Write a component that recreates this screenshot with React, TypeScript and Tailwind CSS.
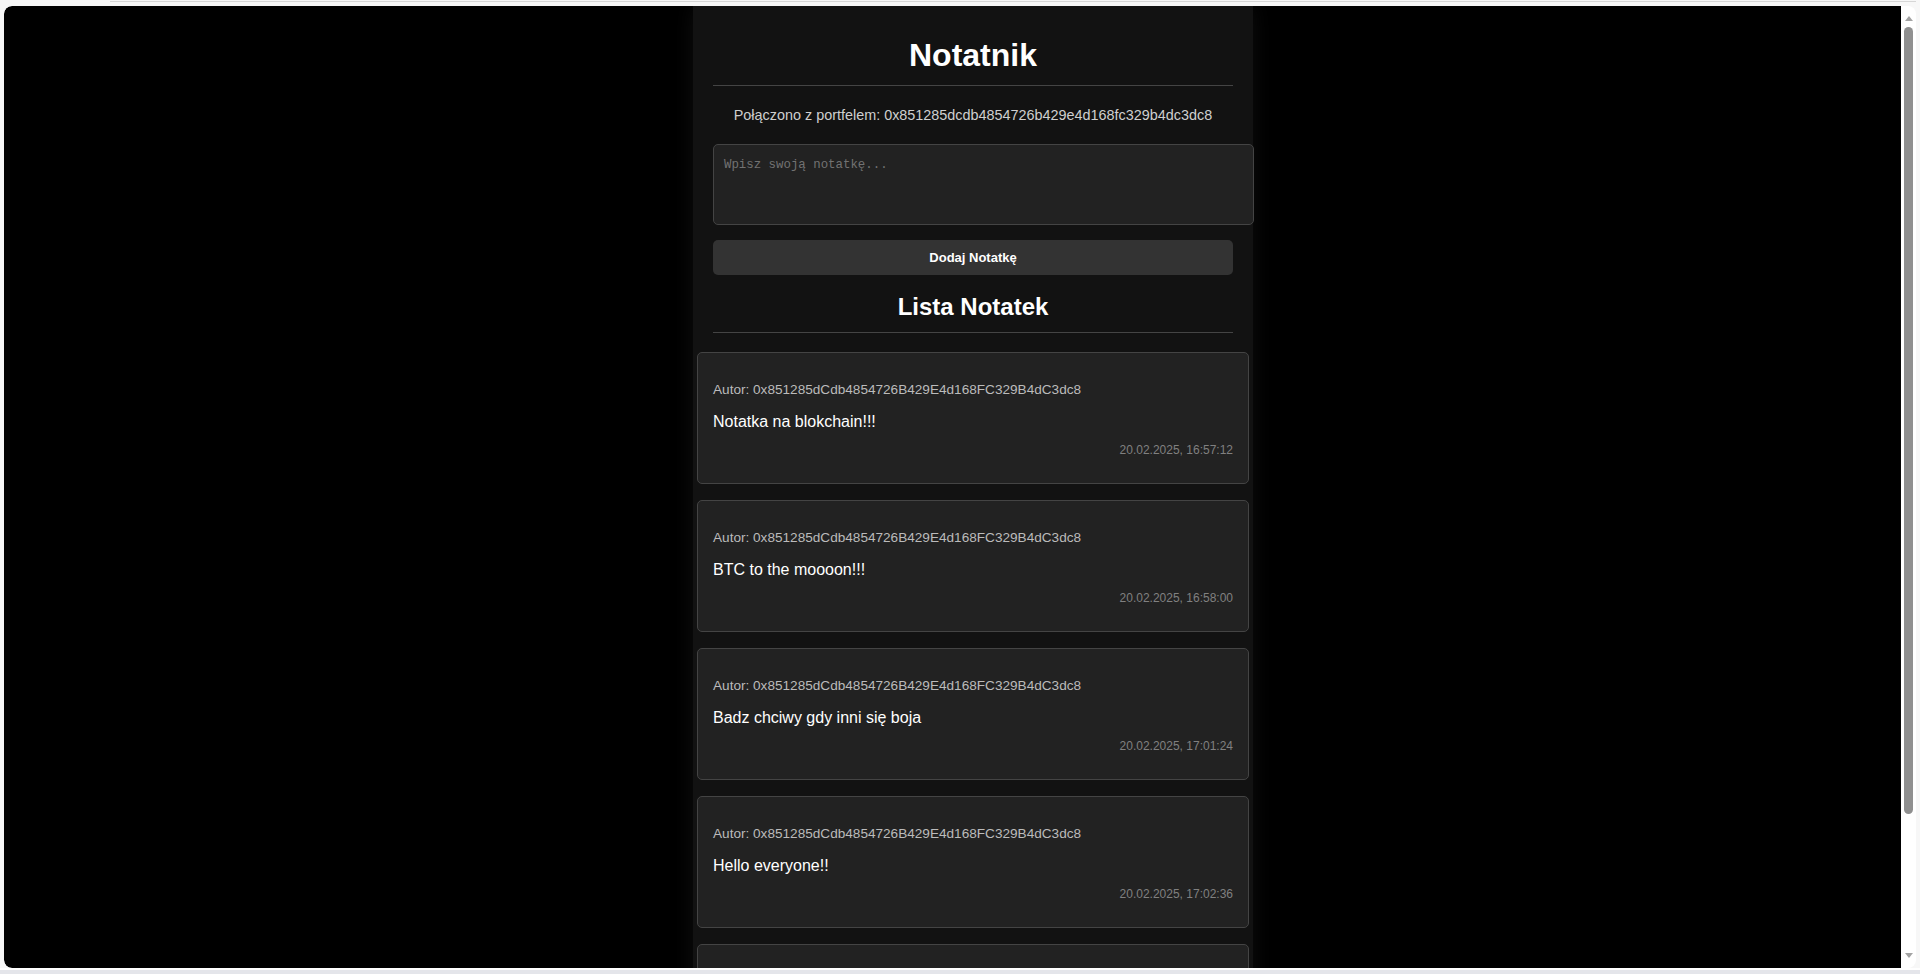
const AUTHOR = "0x851285dCdb4854726B429E4d168FC329B4dC3dc8";

const notes = [
  { text: "Notatka na blokchain!!!", date: "20.02.2025, 16:57:12" },
  { text: "BTC to the moooon!!!", date: "20.02.2025, 16:58:00" },
  { text: "Badz chciwy gdy inni się boja", date: "20.02.2025, 17:01:24" },
  { text: "Hello everyone!!", date: "20.02.2025, 17:02:36" },
];

const NoteCard = ({ text, date }: { text: string; date: string }) => (
  <div className="border border-[#444] rounded-[5px] bg-[#222] pt-[29px] pb-[26px] px-[15px]">
    <p className="text-[13.6px] leading-[16px] text-[#bbb]">Autor: {AUTHOR}</p>
    <p className="mt-[15px] text-[16px] leading-[18px] text-white">{text}</p>
    <p className="mt-[12px] text-[12px] leading-[14px] text-right text-[#808080]">{date}</p>
  </div>
);

export default function App() {
  return (
    <div className="w-[1920px] h-[974px] bg-[#f7f7f7] overflow-hidden flex flex-col font-['Liberation_Sans',Arial,sans-serif]">
      {/* top edge of browser chrome */}
      <div className="h-[6px] shrink-0 pl-[110px] pr-[4px]">
        <div className="mt-[1px] h-px bg-[#d6d6d6]" />
      </div>

      {/* browser viewport */}
      <div className="ml-[4px] w-[1912px] h-[962px] shrink-0 rounded-[8px] bg-white flex overflow-hidden">
        <div className="w-[1897px] h-full bg-black overflow-hidden rounded-l-[8px]">
          <div className="ml-[689px] w-[560px] min-h-full bg-[#121212] px-5 pt-[31px] shadow-[0_0_20px_rgba(255,255,255,0.06)]">
            <h1 className="text-[32px] leading-[37px] font-bold text-center text-white">Notatnik</h1>
            <div className="mt-[11px] h-px bg-[#444]" />
            <p className="mt-[21px] text-[14.4px] leading-[17px] text-center text-[#cfcfcf]">
              Połączono z portfelem: 0x851285dcdb4854726b429e4d168fc329b4dc3dc8
            </p>
            <textarea
              placeholder="Wpisz swoją notatkę..."
              className="mt-[20px] block w-[541px] h-[81px] px-[10px] pt-[12px] pb-[10px] border border-[#444] rounded-[5px] bg-[#222] resize-none text-[12.4px] leading-[16px] text-white font-['Liberation_Mono',monospace] placeholder:text-[#727272] outline-none"
            />
            <button
              type="button"
              className="mt-[15px] block w-full h-[35px] rounded-[5px] bg-[#333] text-white font-bold text-[13px]"
            >
              Dodaj Notatkę
            </button>
            <h2 className="mt-[18px] text-[24px] leading-[28px] font-bold text-center text-white">Lista Notatek</h2>
            <div className="mt-[11px] h-px bg-[#444]" />
            <div className="mt-[19px] -mx-4 flex flex-col gap-4 pb-5">
              {notes.map((n) => (
                <NoteCard key={n.date} text={n.text} date={n.date} />
              ))}
              {/* next card, scrolled below the fold */}
              <div className="h-[132px] border border-[#444] rounded-[5px] bg-[#222]" />
            </div>
          </div>
        </div>

        {/* scrollbar */}
        <div className="w-[15px] h-full flex flex-col items-center pt-[10px] pb-[10px]">
          <div className="w-0 h-0 border-x-[4px] border-x-transparent border-b-[5px] border-b-[#a3a3a3]" />
          <div className="mt-[6px] w-[9px] h-[787px] rounded-full bg-[#8f8f8f]" />
          <div className="flex-1" />
          <div className="w-0 h-0 border-x-[4px] border-x-transparent border-t-[5px] border-t-[#a3a3a3]" />
        </div>
      </div>

      <div className="flex-1 border-t-2 border-white bg-[#e4e5ea]" />
    </div>
  );
}
